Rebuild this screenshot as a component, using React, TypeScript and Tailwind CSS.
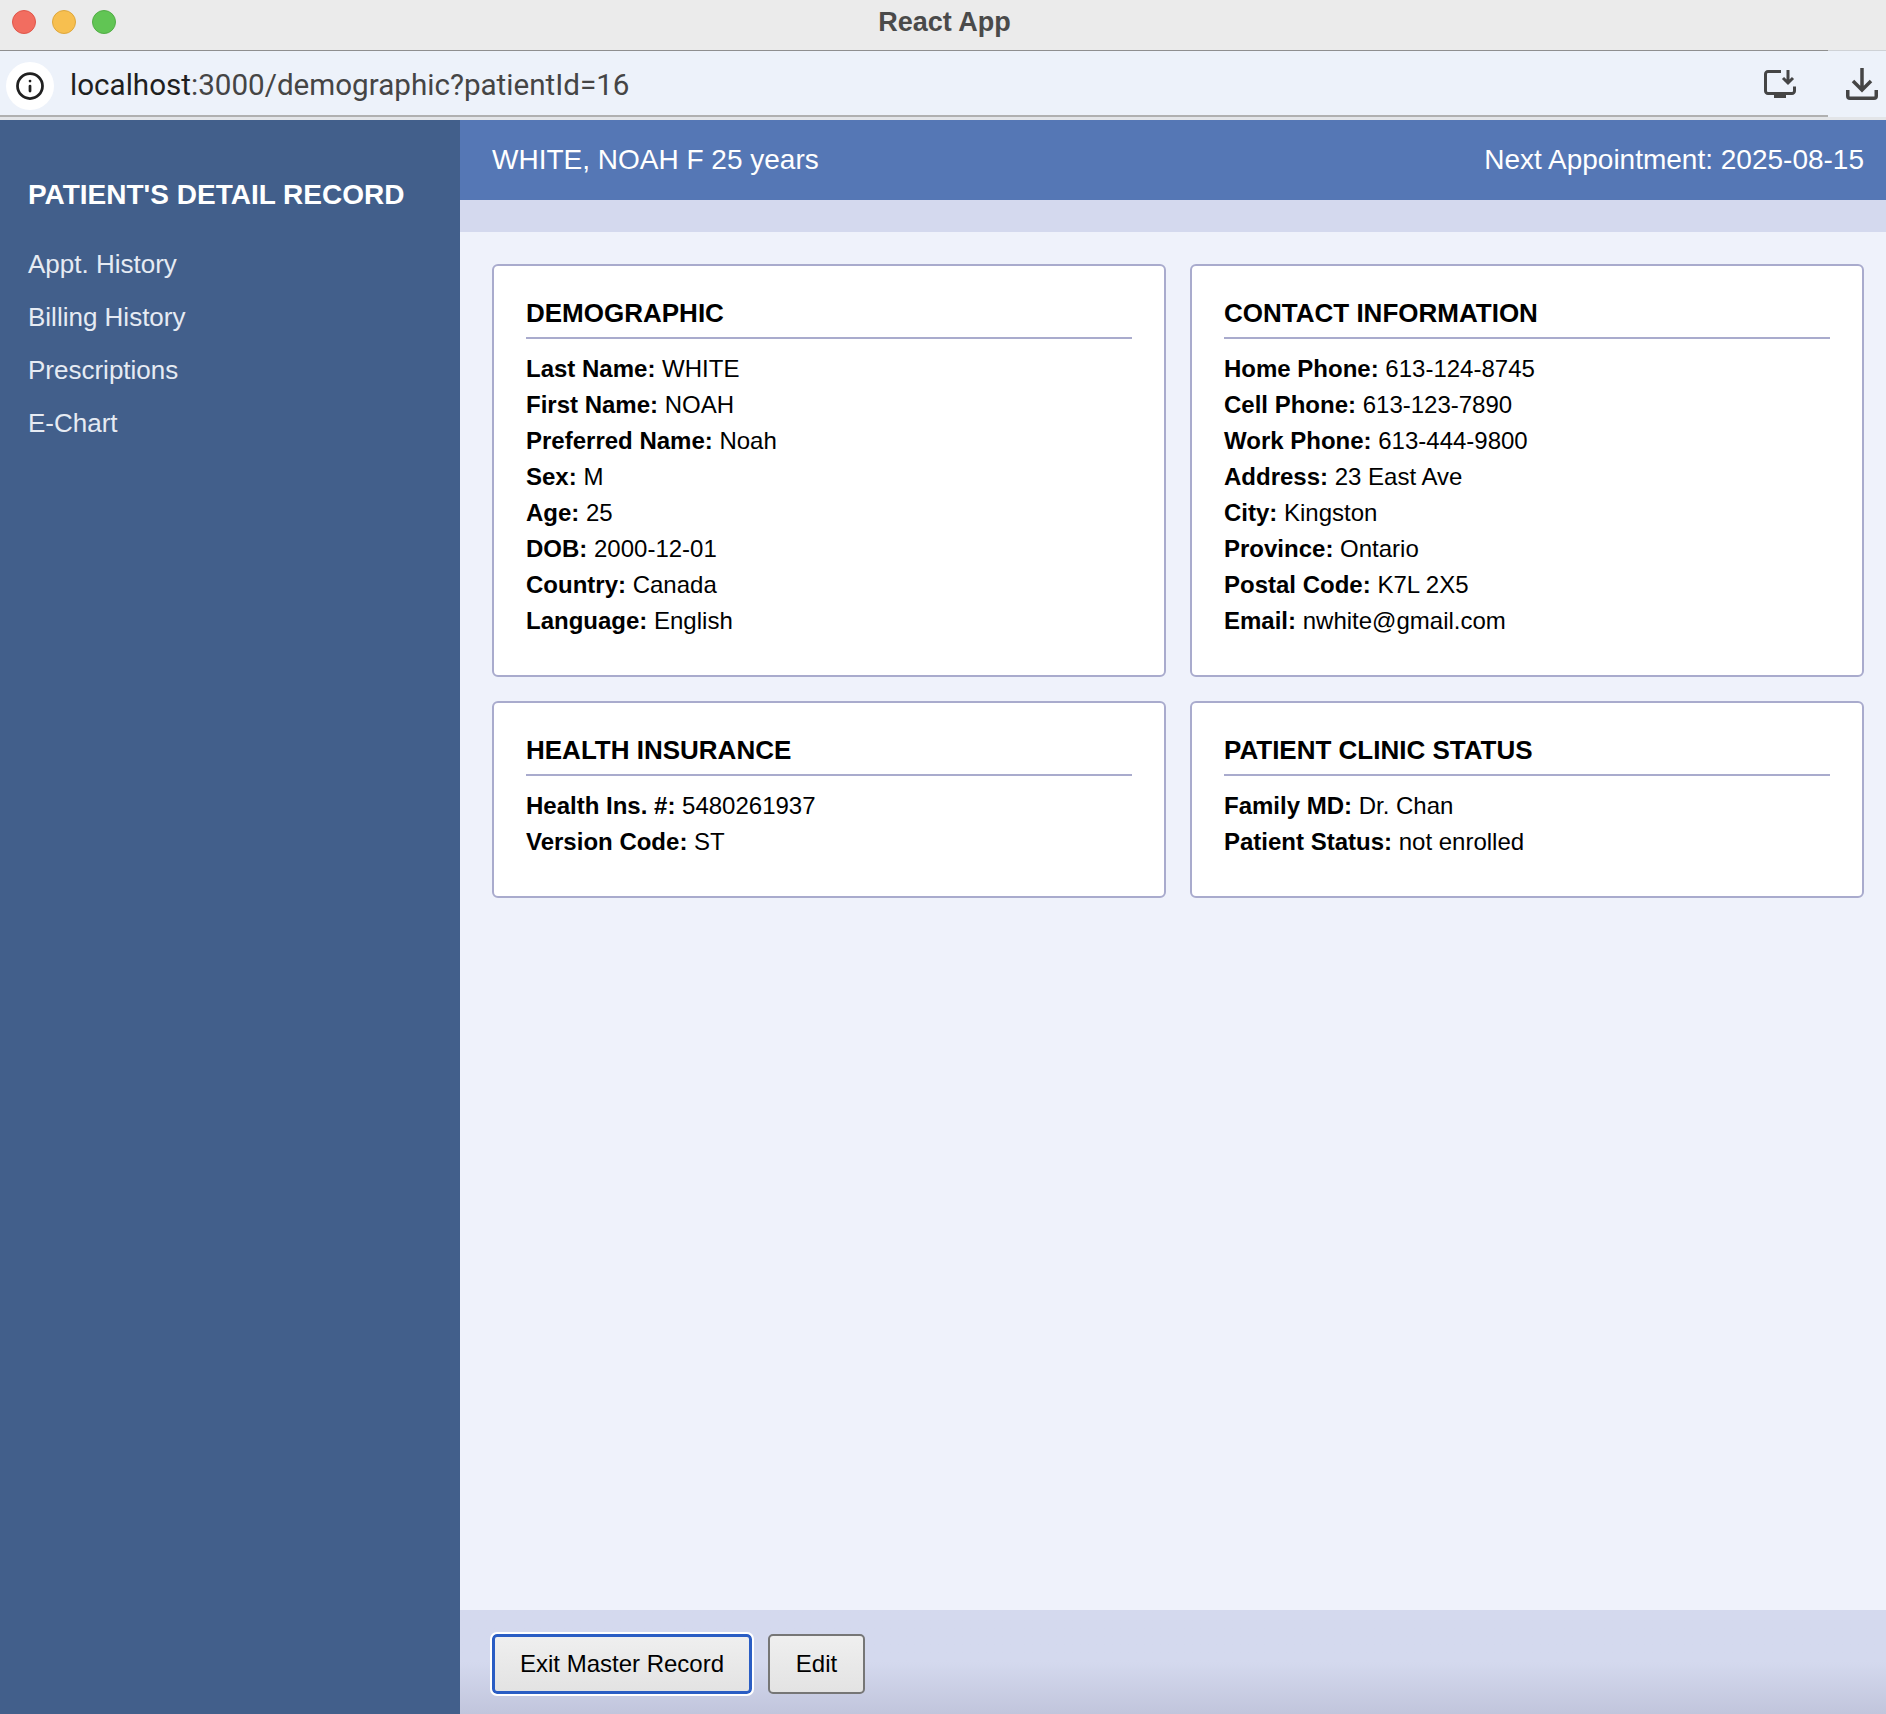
import { Info } from 'lucide-react';

const sections = [
  {
    title: 'DEMOGRAPHIC',
    rows: [
      ['Last Name', 'WHITE'],
      ['First Name', 'NOAH'],
      ['Preferred Name', 'Noah'],
      ['Sex', 'M'],
      ['Age', '25'],
      ['DOB', '2000-12-01'],
      ['Country', 'Canada'],
      ['Language', 'English'],
    ],
  },
  {
    title: 'CONTACT INFORMATION',
    rows: [
      ['Home Phone', '613-124-8745'],
      ['Cell Phone', '613-123-7890'],
      ['Work Phone', '613-444-9800'],
      ['Address', '23 East Ave'],
      ['City', 'Kingston'],
      ['Province', 'Ontario'],
      ['Postal Code', 'K7L 2X5'],
      ['Email', 'nwhite@gmail.com'],
    ],
  },
  {
    title: 'HEALTH INSURANCE',
    rows: [
      ['Health Ins. #', '5480261937'],
      ['Version Code', 'ST'],
    ],
  },
  {
    title: 'PATIENT CLINIC STATUS',
    rows: [
      ['Family MD', 'Dr. Chan'],
      ['Patient Status', 'not enrolled'],
    ],
  },
];

const navItems = ['Appt. History', 'Billing History', 'Prescriptions', 'E-Chart'];

function InstallIcon() {
  return (
    <svg width="32" height="28" viewBox="0 0 32 28" fill="none" stroke="#454545" strokeWidth="3">
      <path d="M17 1.5H4A2.5 2.5 0 0 0 1.5 4v17A2.5 2.5 0 0 0 4 23.5h24a2.5 2.5 0 0 0 2.5-2.5v-4.500" />
      <path d="M24 0v12M19 8l5 5 5-5" />
      <path d="M10 26h12" strokeWidth="4" />
    </svg>
  );
}

function DownloadIcon() {
  return (
    <svg width="32" height="32" viewBox="0 0 32 32" fill="none" stroke="#454545" strokeWidth="3.5">
      <path d="M16 0v20M7 13l9 9 9-9" />
      <path d="M1.750 22v6a2.250 2.250 0 0 0 2.250 2.250h24a2.250 2.250 0 0 0 2.250-2.250v-6" />
    </svg>
  );
}

function Card({ title, rows }: { title: string; rows: string[][] }) {
  return (
    <div className="bg-white border-2 border-[#a9abcd] rounded-[6px] px-[32px] pt-[32px] pb-[36px]">
      <h2 className="text-[26px] leading-[30px] font-bold text-black pb-[9px] border-b-2 border-[#a9abcd] mb-[12px]">{title}</h2>
      {rows.map(([label, value]) => (
        <p key={label} className="text-[24px] leading-[36px] text-black">
          <strong className="font-bold">{label}:</strong> {value}
        </p>
      ))}
    </div>
  );
}

export default function App() {
  return (
    <div className="h-[1714px] flex flex-col overflow-hidden font-['Liberation_Sans',Arial,sans-serif]">
      <div className="h-[51px] shrink-0 relative bg-[#ebebeb] flex items-center justify-center pb-[7px] pl-[3px]">
        <div className="absolute left-[12px] top-[10px] flex gap-[16px]">
          <div className="w-[24px] h-[24px] rounded-full bg-[#f26d60] border border-[#e0564a]" />
          <div className="w-[24px] h-[24px] rounded-full bg-[#f7bf4f] border border-[#dea73c]" />
          <div className="w-[24px] h-[24px] rounded-full bg-[#61c554] border border-[#52ad46]" />
        </div>
        <span className="text-[27px] font-bold text-[#4a4a4a]">React App</span>
        <div className="absolute left-0 bottom-0 w-full h-[1px] bg-[#cfd2d6]" />
        <div className="absolute left-0 bottom-0 w-[1828px] h-[1px] bg-[#8f8f8f]" />
      </div>
      <div className="h-[69px] shrink-0 bg-[#edf2fa] flex items-center relative">
        <div className="ml-[6px] w-[48px] h-[48px] rounded-full bg-white flex items-center justify-center">
          <Info size={30} strokeWidth={2.2} className="text-[#202020]" />
        </div>
        <div className="ml-[16px] pb-[1px] text-[29.6px] text-[#454545] font-['Roboto',sans-serif]">
          <span className="text-[#1f1f1f]">localhost</span>:3000/demographic?patientId=16
        </div>
        <div className="ml-auto flex items-center gap-[50px] pr-[8px] pb-[3px]">
          <InstallIcon />
          <DownloadIcon />
        </div>
        <div className="absolute left-0 bottom-0 w-full h-[5px] bg-[#edf2fa]" />
        <div className="absolute left-0 bottom-0 w-full h-[3px] bg-[#e3e5e8]" />
        <div className="absolute left-0 bottom-[3px] w-[1828px] h-[2px] bg-[#b0b0b0]" />
      </div>
      <div className="flex-1 flex min-h-0">
        <aside className="w-[460px] shrink-0 bg-[#425f8b] text-white px-[28px] pt-[59px]">
          <h1 className="text-[28px] leading-[32px] font-bold mb-[27px]">PATIENT'S DETAIL RECORD</h1>
          <nav className="flex flex-col">
            {navItems.map((item) => (
              <a key={item} className="text-[26px] leading-[53px] text-[#e6ebf3]">{item}</a>
            ))}
          </nav>
        </aside>
        <main className="flex-1 min-w-0 flex flex-col bg-[#eff2fb]">
          <header className="h-[80px] shrink-0 bg-[#5577b5] text-white text-[28px] flex items-center justify-between pl-[32px] pr-[22px]">
            <span>WHITE, NOAH F 25 years</span>
            <span>Next Appointment: 2025-08-15</span>
          </header>
          <div className="h-[32px] shrink-0 bg-[#d4d9ee]" />
          <div className="flex-1 grid grid-cols-2 gap-x-[24px] gap-y-[24px] content-start pl-[32px] pr-[22px] pt-[32px]">
            {sections.map((s) => (
              <Card key={s.title} title={s.title} rows={s.rows} />
            ))}
          </div>
          <footer className="h-[104px] shrink-0 bg-gradient-to-b from-[#d4d9ee] from-50% to-[#c1c5dc] flex items-center gap-[16px] pl-[32px] pt-[4px]">
            <button className="h-[60px] w-[260px] rounded-[5px] border-[3px] border-[#2a5dc4] outline-2 outline-white bg-gradient-to-b from-[#efefef] to-[#e3e3e3] text-[24px] text-black">
              Exit Master Record
            </button>
            <button className="h-[60px] w-[97px] rounded-[5px] border-2 border-[#767676] bg-gradient-to-b from-[#efefef] to-[#e3e3e3] text-[24px] text-black">
              Edit
            </button>
          </footer>
        </main>
      </div>
    </div>
  );
}
